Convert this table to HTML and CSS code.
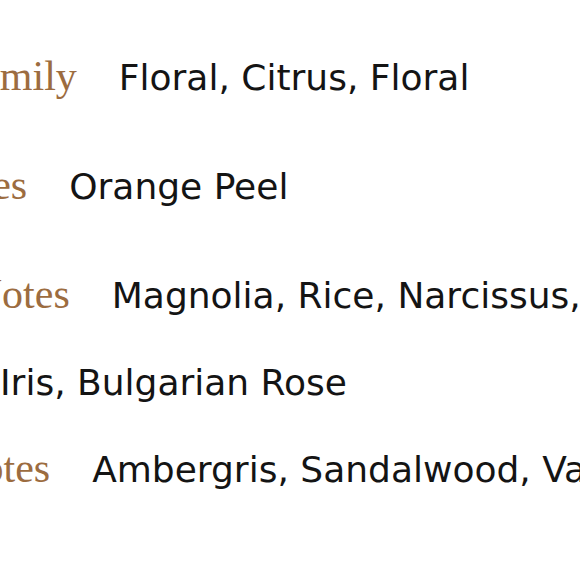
FILE: index.html
```html
<!DOCTYPE html>
<html lang="en">
<head>
<meta charset="utf-8">
<title>Fragrance Notes</title>
<link rel="stylesheet" href="styles.css">
</head>
<body>
<dl class="notes">
  <div class="row row--family"><dt class="label">Scent Family</dt><dd class="value">Floral, Citrus, Floral</dd></div>
  <div class="row row--top"><dt class="label">Top Notes</dt><dd class="value">Orange Peel</dd></div>
  <div class="row row--heart"><dt class="label">Heart Notes</dt><dd class="value">Magnolia, Rice, Narcissus, Iris, Bulgarian Rose</dd></div>
  <div class="row row--base"><dt class="label">Base Notes</dt><dd class="value">Ambergris, Sandalwood, Vanilla</dd></div>
</dl>
</body>
</html>
```
FILE: styles.css
```css
html, body {
  margin: 0;
  padding: 0;
  background: #ffffff;
  overflow: hidden;
}

.notes {
  margin: 0;
  padding: 34px 0 0 0;
  width: 600px;
}

.row {
  display: block;
  min-height: 109px;
  font-family: "DejaVu Sans", sans-serif;
  font-size: 36px;
  line-height: 87px;
  color: #141414;
}

.label,
.value {
  display: inline;
  margin: 0;
}

.label {
  font-family: "Liberation Serif", serif;
  font-size: 42px;
  line-height: 1;
  color: #9c6c40;
  margin-right: 42px;
}

.value {
  color: #141414;
}

.row--family { text-indent: -146px; }
.row--top { text-indent: -146px; }
.row--heart { text-indent: -132px; }
.row--base { text-indent: -140px; white-space: nowrap; }
```
